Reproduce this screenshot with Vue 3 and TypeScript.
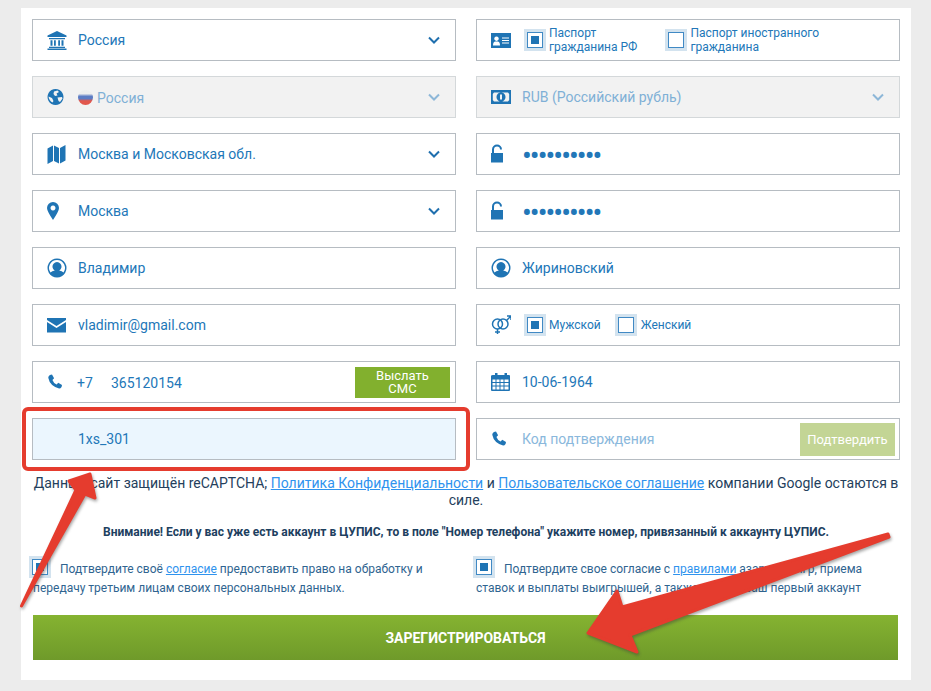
<template>
  <div class="page">
    <div class="panel">
      <div class="grid">
        <div class="field">
          <svg class="ico" viewBox="0 0 20 20"><path :d="icons.bank" /></svg>
          <span>Россия</span>
          <svg class="chev" viewBox="0 0 12 8"><path d="M1 1.5l5 5 5-5" /></svg>
        </div>
        <div class="field">
          <svg class="ico" viewBox="0 0 20 20"><path :d="icons.card" /></svg>
          <label class="opt small"><i class="check on"></i><span>Паспорт<br />гражданина РФ</span></label>
          <label class="opt small second"><i class="check"></i><span>Паспорт иностранного<br />гражданина</span></label>
        </div>

        <div class="field disabled">
          <svg class="ico" viewBox="0 0 20 20"><path :d="icons.globe" /></svg>
          <i class="flag"></i>
          <span class="low">Россия</span>
          <svg class="chev" viewBox="0 0 12 8"><path d="M1 1.5l5 5 5-5" /></svg>
        </div>
        <div class="field disabled">
          <svg class="ico" viewBox="0 0 20 20"><path :d="icons.money" /></svg>
          <span>RUB (Российский рубль)</span>
          <svg class="chev" viewBox="0 0 12 8"><path d="M1 1.5l5 5 5-5" /></svg>
        </div>

        <div class="field">
          <svg class="ico" viewBox="0 0 20 20"><path :d="icons.map" /></svg>
          <span>Москва и Московская обл.</span>
          <svg class="chev" viewBox="0 0 12 8"><path d="M1 1.5l5 5 5-5" /></svg>
        </div>
        <div class="field">
          <svg class="ico" viewBox="0 0 20 20"><path :d="icons.lock" /></svg>
          <span class="dots">••••••••••</span>
        </div>

        <div class="field">
          <svg class="ico" viewBox="0 0 20 20"><path :d="icons.pin" /></svg>
          <span>Москва</span>
          <svg class="chev" viewBox="0 0 12 8"><path d="M1 1.5l5 5 5-5" /></svg>
        </div>
        <div class="field">
          <svg class="ico" viewBox="0 0 20 20"><path :d="icons.lock" /></svg>
          <span class="dots">••••••••••</span>
        </div>

        <div class="field">
          <svg class="ico" viewBox="0 0 20 20"><path :d="icons.user" /></svg>
          <span>Владимир</span>
        </div>
        <div class="field">
          <svg class="ico" viewBox="0 0 20 20"><path :d="icons.user" /></svg>
          <span>Жириновский</span>
        </div>

        <div class="field">
          <svg class="ico" viewBox="0 0 20 20"><path :d="icons.mail" /></svg>
          <span>vladimir@gmail.com</span>
        </div>
        <div class="field">
          <svg class="ico line" viewBox="0 0 20 20">
            <circle cx="6.5" cy="9" r="5" />
            <circle cx="12" cy="9" r="5" />
            <path d="M6.5 14v5M4 17h5M15.500 5.500L19.500 1.500M16 1h4v4" />
          </svg>
          <label class="opt small"><i class="check on"></i><span>Мужской</span></label>
          <label class="opt small third"><i class="check"></i><span>Женский</span></label>
        </div>

        <div class="field">
          <svg class="ico" viewBox="0 -2 24 24"><path :d="icons.phone" /></svg>
          <span class="code">+7</span>
          <span class="num">365120154</span>
          <button class="btn sms" type="button">Выслать СМС</button>
        </div>
        <div class="field">
          <svg class="ico" viewBox="0 0 20 20"><path :d="icons.calendar" /></svg>
          <span>10-06-1964</span>
        </div>

        <div class="field promo">
          <span class="no-icon">1xs_301</span>
        </div>
        <div class="field">
          <svg class="ico" viewBox="0 -2 24 24"><path :d="icons.phone" /></svg>
          <span class="hint">Код подтверждения</span>
          <button class="btn confirm" type="button">Подтвердить</button>
        </div>
      </div>

      <p class="captcha">
        Данный сайт защищён reCAPTCHA; <a>Политика Конфиденциальности</a> и
        <a>Пользовательское соглашение</a> компании Google остаются в силе.
      </p>

      <p class="notice">
        Внимание! Если у вас уже есть аккаунт в ЦУПИС, то в поле "Номер телефона" укажите номер, привязанный к аккаунту ЦУПИС.
      </p>

      <div class="consent">
        <div>
          <i class="check on"></i>
          Подтвердите своё <a>согласие</a> предоставить право на обработку и передачу третьим лицам своих персональных данных.
        </div>
        <div>
          <i class="check on"></i>
          Подтвердите свое согласие с <a>правилами</a> азартных игр, приема ставок и выплаты выигрышей, а также что это ваш первый аккаунт
        </div>
      </div>

      <button class="submit" type="button">ЗАРЕГИСТРИРОВАТЬСЯ</button>
    </div>

    <!-- пометки поверх скриншота -->
    <div class="mark"></div>
    <svg class="arrows" viewBox="0 0 931 691">
      <path d="M90 474L69 481L76 490L21.500 606L85 494L95 498Z" />
      <path d="M888 534L622 607L617 591L588 633L637 652L630 635L889 537Z" />
    </svg>
  </div>
</template>

<script setup lang="ts">
// контуры иконок, сетка 20x20
const icons: Record<string, string> = {
  bank: 'M10 1L19.500 5.500V7H.5V5.500ZM2 8h16v1.200H2ZM3.500 10.200h2v5.600h-2ZM7 10.200h1.800v5.600H7ZM11.200 10.200H13v5.600h-1.800ZM14.500 10.200h2v5.600h-2ZM2 16.800h16V18H2ZM.5 18.600h19V20H.5Z',
  globe: 'M8.500 2a8 8 0 1 0 .01 0ZM7 4.500L10.500 3.500 12 5 9.500 6.500 10.500 8.500 8 9 6.500 7ZM10.500 10.500L15 10l.5 1.500L13 15 11.500 14ZM1.500 9.500L5 11l1.500 3-1 1.500Q2 13.500 1.500 9.500Z',
  map: 'M.5 4.500L6 1.500V17L.5 20ZM7 1.500L12 4V19.500L7 17ZM13 4L18.500 1V16.500L13 19.500Z',
  pin: 'M6 1a6 6 0 0 1 6 6q0 3-6 12Q0 10 0 7a6 6 0 0 1 6-6ZM6 4.500a2.500 2.500 0 1 0 .01 0Z',
  user: 'M10 .5a9.500 9.500 0 1 0 .01 0ZM10 2a8 8 0 0 1 6.500 12.600q-1.500-1.400-4.300-2.100a4.500 4.500 0 1 0-4.400 0Q5 13.200 3.500 14.600A8 8 0 0 1 10 2Z',
  mail: 'M0 3h19v2L9.500 11 0 5ZM0 7l9.500 6L19 7v10.500H0Z',
  phone: 'M3.500 1.500L6 1l2.500 4.500L6.500 7.500q1.500 4 5 5.500l2-2L18 13.500 17.500 16q-1.500 2-3 1.800Q3.500 15 1.500 5 1.500 3 3.500 1.500Z',
  card: 'M0 3h20v15H0ZM7 6h-.01ZM5.500 6.500a2.200 2.200 0 1 0 .01 0ZM2 15.500h7q0-3.500-2-4h-3q-2 .5-2 4ZM11 7.500v1h7v-1ZM11 10v1h7v-1ZM11 12.500v1h7v-1Z',
  money: 'M0 3h20v14H0ZM3 5.500L1.800 7v6L3 14.500h14l1.200-1.500V7L17 5.500ZM10 5.500a4.500 4.500 0 1 0 .01 0ZM9 7.500h2v5H9Z',
  lock: 'M1 9V5.500a5 5 0 0 1 10 0H9a3 3 0 0 0-6 0V9H12v9.500H0V9Z',
  calendar: 'M2 3h2V1h2.500v2h7V1H16v2h2q1 0 1 1v14q0 1-1 1H1q-1 0-1-1V4q0-1 2-1ZM1.500 7.500v2.500h3V7.500ZM5.500 7.500v2.500h3V7.500ZM9.500 7.500v2.500h3V7.500ZM13.500 7.500v2.500h4V7.500ZM1.500 11v2.500h3V11ZM5.500 11v2.500h3V11ZM9.500 11v2.500h3V11ZM13.500 11v2.500h4V11ZM1.500 14.500V17.500h3V14.500ZM5.500 14.500V17.500h3V14.500ZM9.500 14.500V17.500h3V14.500ZM13.500 14.500V17.500h4V14.500Z'
}
</script>

<style>
body {
  background: #ececec;
}
</style>

<style scoped>
.page {
  position: relative;
  width: 931px;
  height: 691px;
  overflow: hidden;
  background: #ececec;
  font-family: Roboto, "Liberation Sans", sans-serif;
}

.panel {
  box-sizing: border-box;
  width: 890px;
  height: 672px;
  margin-left: 21px;
  position: relative;
  top: 8px;
  padding: 11px 11px 0;
  background: #fff;
}

.grid {
  display: grid;
  grid-template-columns: 424px 424px;
  grid-auto-rows: 42px;
  column-gap: 20px;
  row-gap: 15px;
}

.field {
  display: flex;
  align-items: center;
  box-sizing: border-box;
  padding-left: 14px;
  border: 1px solid #b6bcc2;
  font-size: 14px;
  color: #2277b8;
}

.field.disabled {
  background: #f2f2f2;
  border-color: #d4d8da;
  color: #7fb0d6;
}

.field.promo {
  background: #ebf6fe;
}

.ico {
  flex: none;
  width: 20px;
  height: 20px;
  margin-right: 11px;
  fill: #1f74b4;
  fill-rule: evenodd;
}

.ico.line {
  fill: none;
  stroke: #1f74b4;
  stroke-width: 1.5;
}

.chev {
  width: 12px;
  height: 8px;
  margin-left: auto;
  margin-right: 15px;
  fill: none;
  stroke: currentColor;
  stroke-width: 2;
}

.field .chev {
  color: #1f6fae;
}

.field.disabled .chev {
  color: #8db7d8;
}

.flag {
  width: 15px;
  height: 15px;
  margin-right: 4px;
  border-radius: 50%;
  background: linear-gradient(#eee 25%, #5c7cc4 42%, #5c7cc4 58%, #e2574c 72%);
}

.low {
  position: relative;
  top: 1px;
}

.dots {
  position: relative;
  top: 2px;
  font-size: 29px;
  line-height: 20px;
  letter-spacing: -1.95px;
}

.code {
  margin-left: -1px;
  width: 34px;
  position: relative;
  top: 1px;
}

.num {
  position: relative;
  top: 1px;
}

.no-icon {
  margin-left: 31px;
}

.hint {
  color: #8ab8dc;
}

.btn {
  flex: none;
  width: 95px;
  margin-left: auto;
  margin-right: 4px;
  padding: 0;
  border: 0;
  font-family: inherit;
  color: #fff;
}

.sms {
  height: 31px;
  margin-right: 5px;
  padding: 0 18px;
  background: #82b02e;
  font-size: 13px;
  line-height: 13px;
}

.confirm {
  height: 33px;
  background: #c3d595;
  font-size: 13px;
}

.opt {
  display: flex;
  align-items: center;
}

.small {
  font-size: 12px;
  line-height: 14px;
}

.opt .check {
  margin-right: 3px;
}

.second {
  margin-left: 28px;
}

.third {
  margin-left: 14px;
}

.third .check {
  margin-right: 4px;
}

.opt:first-of-type {
  margin-left: 2px;
}

.check {
  flex: none;
  display: block;
  position: relative;
  box-sizing: border-box;
  width: 22px;
  height: 22px;
  background: #d3e3ef;
  border: 3px solid #d3e3ef;
  outline: 1.5px solid #4089c4;
  outline-offset: -4.5px;
}

.check::before {
  content: "";
  position: absolute;
  inset: 0;
  background: #fff;
  margin: 1px;
}

.check.on::after {
  content: "";
  position: absolute;
  left: 4px;
  top: 4px;
  width: 8px;
  height: 8px;
  background: #1f74b4;
}

.captcha {
  margin: 15px 0 0;
  font-size: 14px;
  line-height: 17px;
  text-align: center;
  color: #24405c;
}

a {
  color: #2f93ee;
  text-decoration: underline;
}

.notice {
  margin: 16px 0 0;
  font-size: 12px;
  line-height: 14px;
  font-weight: 700;
  text-align: center;
  color: #1d4060;
}

.consent {
  display: grid;
  grid-template-columns: 424px 424px;
  column-gap: 20px;
  margin-top: 21px;
  height: 38px;
  overflow: visible;
  font-size: 12px;
  line-height: 19px;
  color: #2f6490;
}

.consent > div {
  padding-left: 1px;
}

.consent > div + div {
  padding-left: 0;
}

.consent .check {
  float: left;
  margin: -4px 9px 0 -4px;
}

.consent > div + div .check {
  margin-left: -3px;
}

.submit {
  display: block;
  width: 865px;
  height: 45px;
  margin: 17px 0 0 1px;
  padding: 0;
  border: 0;
  background: linear-gradient(#85b331, #6f9a2a);
  font-family: inherit;
  font-size: 14px;
  font-weight: 700;
  color: #fff;
}

.mark {
  position: absolute;
  left: 22px;
  top: 407px;
  box-sizing: border-box;
  width: 448px;
  height: 64px;
  border: 4.500px solid #e53c2e;
  border-radius: 6px;
}

.arrows {
  position: absolute;
  left: 0;
  top: 0;
  width: 931px;
  height: 691px;
  fill: #e53c2e;
  stroke: #e53c2e;
  stroke-width: 3;
  stroke-linejoin: round;
  filter: drop-shadow(1px 2px 1.5px rgba(60, 60, 60, 0.45));
}
</style>
